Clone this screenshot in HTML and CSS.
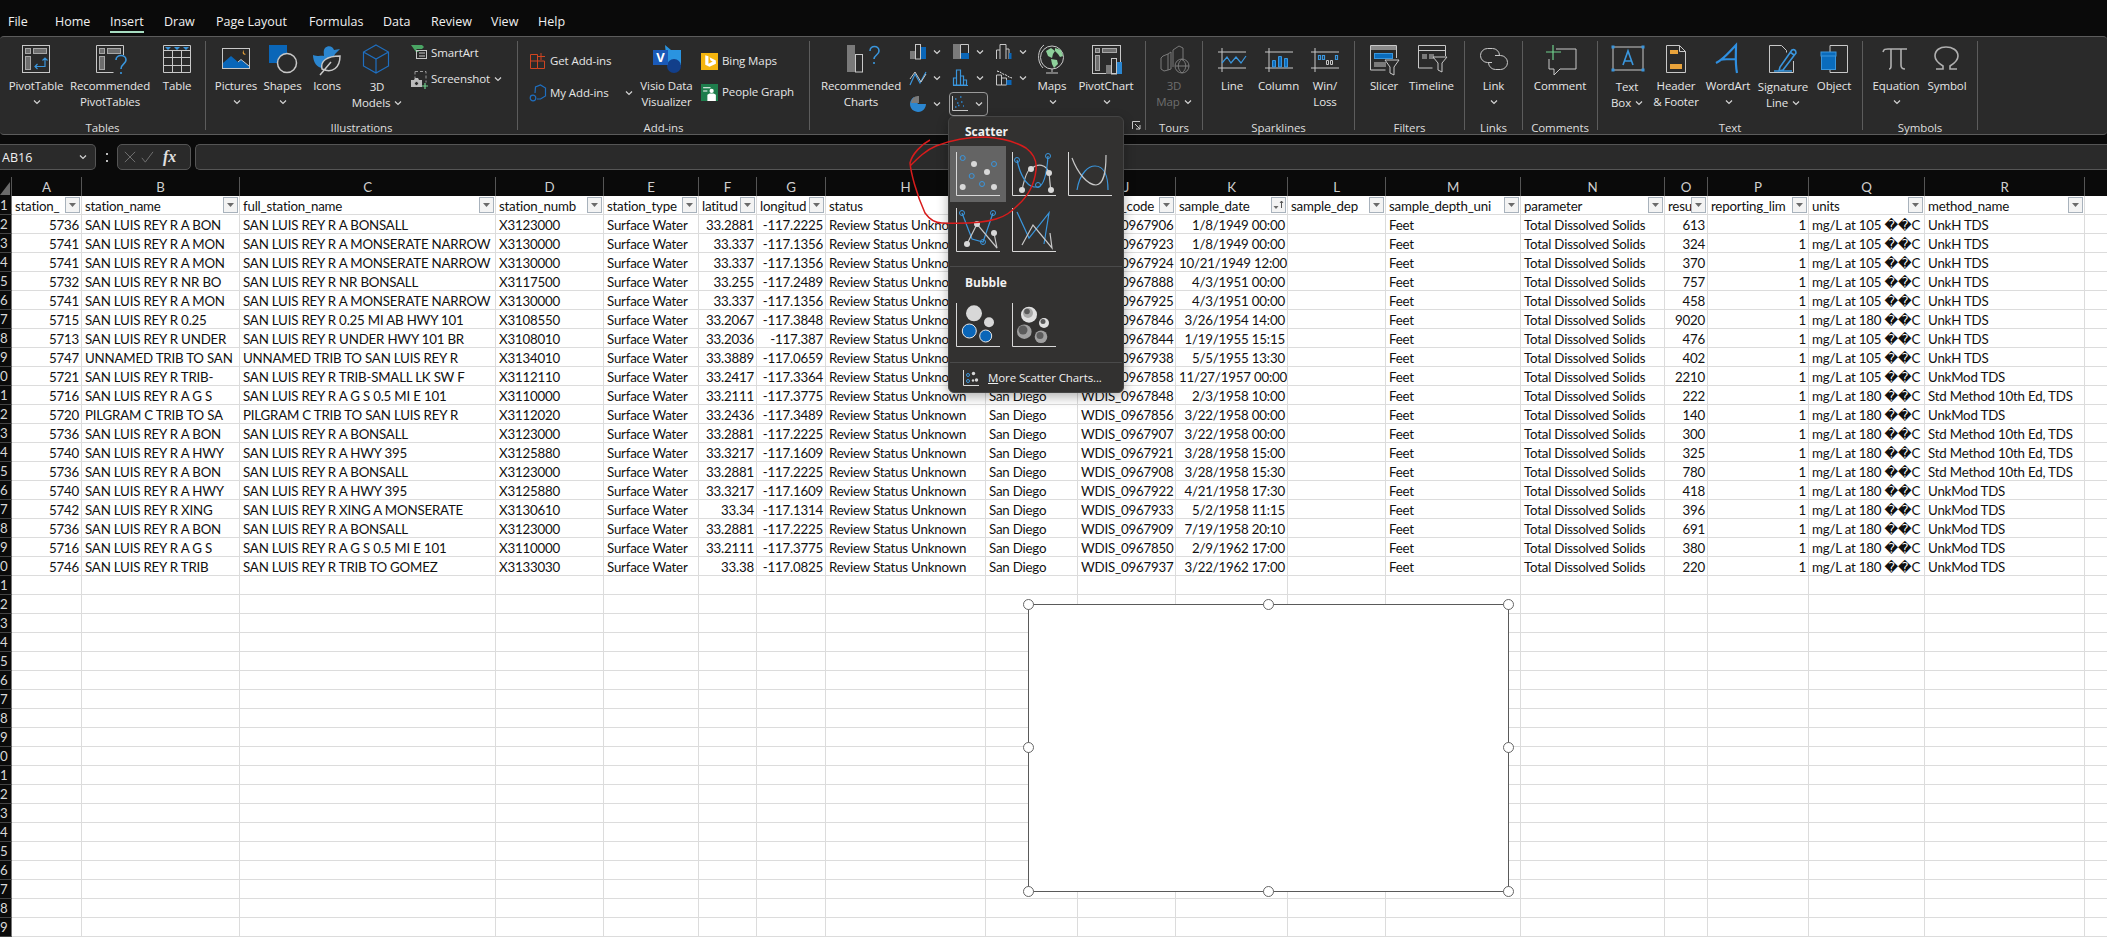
FILE: index.html
```html
<!DOCTYPE html>
<html lang="en">
<head>
<meta charset="utf-8">
<title>Excel - Insert Scatter</title>
<link rel="stylesheet" href="styles.css">
</head>
<body>
<svg class="sprite" aria-hidden="true">
<symbol id="chev" viewBox="0 0 8 16"><path class="chv" d="M1 6.5l3 3 3-3"/></symbol>
<symbol id="pivot" viewBox="0 0 28 28"><rect class="s" x=".5" y=".5" width="27" height="27"/><rect class="gb" x="3.5" y="3.5" width="5" height="5"/><rect class="gb" x="11.5" y="3.5" width="13" height="5"/><rect class="gb" x="3.5" y="11.5" width="5" height="13"/><path class="b" d="M23 13v8.5H13M20.5 15.5L23 13l2.5 2.5M15.5 19L13 21.500l2.500 2.500"/></symbol>
<symbol id="recpivot" viewBox="0 0 28 28"><path class="s" d="M27.500 10V.5H.5v27h17"/><rect class="gb" x="3.500" y="3.500" width="5" height="5"/><rect class="gb" x="11.500" y="3.500" width="13" height="5"/><rect class="gb" x="3.500" y="11.500" width="5" height="13"/><path class="b2" d="M20 15c0-6 10-6 10 0 0 4-5 4-5 9M25 27v2"/></symbol>
<symbol id="table" viewBox="0 0 28 28"><path class="s" d="M.5.500h27v27H.5zM.5 5.500h27M.5 12.500h27M.5 20.500h27M9.500 5.500v22M18.500 5.500v22"/><path class="f2" d="M2 2h6l-3 3zM11 2h6l-3 3zM20 2h6l-3 3z"/></symbol>
<symbol id="pictures" viewBox="0 0 28 28"><rect class="s" x=".5" y="3.500" width="27" height="20"/><path class="f" d="M1 23v-5l8-7 7 6 3-2.500 8 6.500v2z"/><path class="s2" d="M16 17l3-2.500 8 6.500"/><path class="or" d="M22 5c-1 2 0 4 2 4-2 2-5-1-2-4z"/></symbol>
<symbol id="shapes" viewBox="0 0 28 28"><rect class="f" x="0" y="0" width="18" height="18"/><circle class="s3" cx="18" cy="18" r="9.500"/></symbol>
<symbol id="icons" viewBox="0 0 28 28"><path class="f3" d="M0 10c6 2 9 0 11 1 0-3-1-5 1-8 3-3 8-2 9 2l6-1-5 5c-1 3-3 4-4 5-4 1-8 4-8 9-6 0-10-6-10-13z"/><path class="s3" d="M9 24c-2-8 5-13 18-13 0 11-7 18-18 13zM7 30l11-13"/></symbol>
<symbol id="models" viewBox="0 0 28 28"><path class="bd" d="M13 0l12.500 7v14L13 28 .5 21V7zM.5 7L13 14l12.500-7M13 14v14"/></symbol>
<symbol id="smartart" viewBox="0 0 16 16"><path class="gr" d="M0 0h11l2 2-2 2H5l3 3H5z"/><rect class="s" x="5.500" y="5.500" width="10" height="8"/><path class="s" d="M8 8h6M8 11h6"/></symbol>
<symbol id="screenshot" viewBox="0 0 16 16"><path class="da" d="M4 .5h11v11M4 .5v7"/><path class="lf" d="M0 9h3l1-2h3l1 2h3v7H0z"/><circle class="dk" cx="5.500" cy="12.500" r="2"/><path class="gl" d="M14 12v6M11 15h6"/></symbol>
<symbol id="getaddin" viewBox="0 0 16 16"><path class="rd" d="M.5 1.500h7v14h7V8H.5v7.500h7M.5 1.500V8M11 0v7M8 3.500h7"/></symbol>
<symbol id="myaddin" viewBox="0 0 16 16"><path class="bd" d="M5 8l.500-6 5-2 5 3v8l-5 3H7"/><circle class="bd" cx="3" cy="13" r="2.800"/></symbol>
<symbol id="visio" viewBox="0 0 28 28"><path class="lb" d="M12 0l6 5h10v15H14z"/><circle class="db" cx="21" cy="21" r="7"/><rect class="mb" y="5" width="15" height="15"/><text class="vt" x="7.500" y="17">V</text></symbol>
<symbol id="bing" viewBox="0 0 16 16"><rect class="ye" width="16" height="16"/><path class="wh" d="M4 2l3 1v7l4-2-2-1-1-3 6 3v3l-6 3-4-2z"/></symbol>
<symbol id="people" viewBox="0 0 16 16"><rect class="gn" width="16" height="16"/><circle class="wh" cx="10" cy="6.500" r="2"/><path class="wh" d="M6 16v-6l2-1h4l2 1v6zM2 3h7v1H2zM2 6h4v1H2z"/></symbol>
<symbol id="reccharts" viewBox="0 0 28 28"><rect class="g" x="0" y="0" width="8" height="27"/><rect class="s" x="8.500" y="9.500" width="7" height="17.500"/><path class="b2" d="M23 6c0-6 9-6 9 0 0 4-5 4-5 8M27 17v2"/></symbol>
<symbol id="c1" viewBox="0 0 16 16"><rect class="g" y="7" width="5" height="8"/><rect class="s" x="5.500" y=".5" width="5" height="14.500"/><rect class="f" x="11" y="3" width="5" height="12"/></symbol>
<symbol id="c2" viewBox="0 0 16 16"><rect class="g" width="7" height="15"/><path class="s" d="M7.500.5h8v14h-8z"/><rect class="f" x="8" y="9" width="8" height="6"/></symbol>
<symbol id="c3" viewBox="0 0 16 16"><path class="s" d="M.5 15V6H4V.5h6V5h3v10M4 6v9M10 5v10"/><rect class="f" x="13" y="9" width="2.500" height="6"/></symbol>
<symbol id="c4" viewBox="0 0 16 16"><path class="b" d="M0 15L5 4l5 9 6-11"/><path class="s" d="M0 9l5-7 6 10 5-8"/></symbol>
<symbol id="c5" viewBox="0 0 16 16"><path class="b" d="M.5 15V8h3V0h4v6h3v4h3V15zM0 15.500h15M3.500 8v7M7.500 6v9M10.500 10v5"/></symbol>
<symbol id="c6" viewBox="0 0 16 16"><path class="s" d="M.5 15V5h5v10zM5.500 8h5v7h-5z"/><rect class="f" x="10.500" y="10" width="5" height="5"/><path class="wl" d="M1 1l3 1 3 2 3 1 3 2 3 1"/></symbol>
<symbol id="c7" viewBox="0 0 16 16"><path class="f3" d="M8 8h8A8 8 0 1 1 4 1z"/><path class="g" d="M7.500 0H9v7H7.500z"/><path class="g" d="M1 7a7 7 0 0 1 7-7v7z"/></symbol>
<symbol id="c8" viewBox="0 0 16 16"><path class="s" d="M.5 0v14.500H16"/><path class="dots" d="M3 3h1.500M8 1h1.500M5 7h1.500M9 6h1.500M3 11h1.500M6 9.500h1.500M11 10h1"/></symbol>
<symbol id="globe" viewBox="0 0 28 28"><circle class="s" cx="14" cy="12.500" r="11.500"/><path class="s" d="M6 0C0 4-2 16 5 23M14 24v3M8 28h12"/><path class="mg" d="M8 6l5-3 4 3-2 3-1 4-4-2zM17 3l6 2 2 6-3 1-2-3-3-3zM13 14l6 1 1 4-4 4-2-4z"/></symbol>
<symbol id="pivotchart" viewBox="0 0 28 28"><rect class="s" x=".5" y=".5" width="28" height="28"/><rect class="gb" x="3.500" y="3.500" width="4" height="4"/><rect class="gb" x="10.500" y="3.500" width="14" height="4"/><rect class="gb" x="3.500" y="10.500" width="4" height="15"/><rect class="g" x="14" y="20" width="5" height="9"/><rect class="s" x="19.500" y="13.500" width="5" height="15.500"/><rect class="f3" x="25" y="17" width="5" height="12"/></symbol>
<symbol id="map3d" viewBox="0 0 28 28"><path class="ds" d="M3 11l5-2v16l-4 1-3-2V13zM8 9l3-2v17l-3 1M13 5l6-4 4 2v13M13 5v17"/><circle class="ds" cx="22" cy="21" r="7"/><path class="ds" d="M15 21h14M22 14c-5 4-5 10 0 14M22 14c5 4 5 10 0 14"/></symbol>
<symbol id="spline" viewBox="0 0 28 28"><path class="s" d="M4 3v24M0 7h28M0 23h28"/><path class="b" d="M4 18l5-6 4 6 5-6 5 6 5-7"/></symbol>
<symbol id="scol" viewBox="0 0 28 28"><path class="s" d="M4 3v24M0 7h28M0 23h28"/><path class="bf" d="M7.500 15.500h3V22h-3zM13.500 11.500h3V22h-3zM19.500 13.500h3V22h-3z"/></symbol>
<symbol id="swin" viewBox="0 0 28 28"><path class="s" d="M4 3v24M0 7h28M0 23h28"/><path class="b" d="M7.500 10.500h2v4h-2zM11.500 10.500h2v4h-2zM24.500 10.500h2v4h-2z"/><path class="s" d="M15.500 15.500h2v4h-2zM19.500 15.500h2v4h-2z"/></symbol>
<symbol id="slicer" viewBox="0 0 28 28"><path class="s" d="M.5 25V.5h26V13M.5 25h15"/><rect class="lg" x="1" y="1" width="25" height="4"/><rect class="bx" x="4.500" y="8.500" width="18" height="5"/><rect class="g" x="4" y="17" width="12" height="5"/><path class="s f0" d="M15 15h14l-5 7v8l-4-2v-6z"/></symbol>
<symbol id="timeline" viewBox="0 0 28 28"><path class="s" d="M.5 23V.5h27V11M.5 23h14M.5 5.500h27"/><rect class="g" x="4" y="9" width="5" height="5"/><rect class="g" x="11" y="9" width="5" height="5"/><path class="s f0" d="M15 12h14l-5 6v9l-4-2v-7z"/></symbol>
<symbol id="link" viewBox="0 0 28 28"><path class="s" d="M12 17.500H7.500a7 7 0 0 1 0-14h5a7 7 0 0 1 7 7M15 10.500h5.500a7 7 0 0 1 0 14h-5a7 7 0 0 1-7-7"/></symbol>
<symbol id="comment" viewBox="0 0 28 28"><path class="s" d="M10 4h20v20H14l-6 6v-6H3V14"/><path class="gl" d="M7 0v15M0 7h15"/></symbol>
<symbol id="textbox" viewBox="0 0 28 28"><rect class="s" x="0" y="2" width="30" height="23"/><path class="b2" d="M10 20l5-14 5 14M11.500 16h7"/><path class="bf3" d="M-1.500.5h3v3h-3zM28.500.5h3v3h-3zM-1.500 23.500h3v3h-3zM28.500 23.500h3v3h-3z"/></symbol>
<symbol id="header" viewBox="0 0 28 28"><path class="s" d="M4.500.5h13l6 6v21h-19zM17.500.5v6h6"/><path class="ob" d="M8 5h8v4H8zM8 19h12v5H8z"/></symbol>
<symbol id="wordart" viewBox="0 0 28 28"><path class="wa" d="M2 18C10 14 16 6 22 0c0 9-1 18 1 28M6 15c5-1 10-1 16-1"/></symbol>
<symbol id="signature" viewBox="0 0 28 28"><path class="s" d="M.5 27.500V.5h12l5 5v2M24.500 16v11.500H.5"/><path class="b2" d="M11 22l-1 4 4-1L27 8c0-3-2-4-4-3zM21 7l4 3M5 26h18"/></symbol>
<symbol id="object" viewBox="0 0 28 28"><path class="s" d="M10 .5h17.500v27H10"/><path class="s" d="M10 .5v7M10 24v3.500"/><rect class="bx" x="1.500" y="7.500" width="14" height="17"/><rect class="bf" x="1" y="7" width="15" height="4"/></symbol>
<symbol id="pi" viewBox="0 0 28 28"><path class="pi" d="M1 7c1-3 2-3 5-3h19M9 4v17c0 2-1 3-2 3M19 4v16c0 3 1 4 4 4"/></symbol>
<symbol id="omega" viewBox="0 0 28 28"><path class="pi" d="M3 24h7v-3c-5-3-8-6-8-10 0-6 5-9 11-9s12 3 12 9c0 4-3 7-8 10v3h7"/></symbol>
<symbol id="launcher" viewBox="0 0 9 9"><path class="s" d="M.5 8V.5H8M3 3l5 5M8 4v4H4"/></symbol>
<symbol id="fxcross" viewBox="0 0 14 14"><path class="fxl" d="M1 1l12 12M13 1L1 13"/></symbol>
<symbol id="fxcheck" viewBox="0 0 14 14"><path class="fxl" d="M1 8l4 5L14 1"/></symbol>
<symbol id="sc1" viewBox="0 0 56 56"><path class="ax" d="M6.500 6v43.500H50"/><circle class="op" cx="12.700" cy="12" r="2.500"/><circle class="op" cx="44" cy="18" r="2.500"/><circle class="op" cx="21.700" cy="30" r="2.500"/><circle class="op" cx="32" cy="38" r="2.500"/><circle class="fd" cx="24" cy="18" r="3"/><circle class="fd" cx="37" cy="26" r="3"/><circle class="fd" cx="12.700" cy="41" r="3"/><circle class="fd" cx="44" cy="41" r="3"/></symbol>
<symbol id="sc2" viewBox="0 0 56 56"><path class="ax" d="M6.500 6v43.500H50"/><path class="ln" d="M16 44c3-14 6-21 9-21 7-6 15-5 18 4 1 8 1 13 2 17"/><path class="lb2" d="M11 14c3 14 9 26 17 27h4c6-1 9-16 10-31"/><circle class="op" cx="11" cy="14" r="2.500"/><circle class="op" cx="42" cy="10" r="2.500"/><circle class="op" cx="32" cy="39" r="2.500"/><circle class="fd" cx="16" cy="44" r="3"/><circle class="fd" cx="25" cy="23" r="3"/><circle class="fd" cx="43" cy="27" r="3"/><circle class="fd" cx="45" cy="44" r="3"/></symbol>
<symbol id="sc3" viewBox="0 0 56 56"><path class="ax" d="M6.500 6v43.500H50"/><path class="lb2" d="M15 44c3-18 12-24 18-24 9 0 13 10 13 24"/><path class="ln" d="M10 12c6 16 16 27 24 27 8-1 10-13 10-30"/></symbol>
<symbol id="sc4" viewBox="0 0 56 56"><path class="ax" d="M6.500 6v43.500H50"/><path class="lb2" d="M12 11l10 26 11 3 10-29"/><path class="ln" d="M17 42l10-20 20 24-3-15"/><circle class="op" cx="12" cy="11" r="2.500"/><circle class="op" cx="43" cy="11" r="2.500"/><circle class="op" cx="33" cy="40" r="2.500"/><circle class="fd" cx="27" cy="22" r="3"/><circle class="fd" cx="44" cy="31" r="3"/><circle class="fd" cx="17" cy="42" r="3"/></symbol>
<symbol id="sc5" viewBox="0 0 56 56"><path class="ax" d="M6.500 6v43.500H50"/><path class="lb2" d="M11 10l12 26 20-25-5 31"/><path class="ln" d="M16 43l11-20 19 23-2-15"/></symbol>
<symbol id="bu1" viewBox="0 0 56 44"><path class="ax" d="M6.500 0v43.500H50"/><circle class="fd" cx="24" cy="10.300" r="8"/><circle class="fd" cx="39" cy="19.300" r="5"/><circle class="bb" cx="19.300" cy="28" r="7"/><circle class="bb" cx="35.700" cy="33" r="6"/></symbol>
<symbol id="bu2" viewBox="0 0 56 44"><path class="ax" d="M6.500 0v43.500H50"/><circle class="o1" cx="23" cy="11.700" r="8"/><circle class="o2" cx="22" cy="10" r="5"/><circle class="o3" cx="21" cy="8.500" r="2.800"/><circle class="o1" cx="38" cy="20" r="5"/><circle class="o3" cx="37" cy="18.500" r="2.500"/><circle class="o4" cx="18.300" cy="28.700" r="7.300"/><circle class="o5" cx="17" cy="27" r="4.500"/><circle class="o4" cx="35" cy="33.700" r="6.300"/><circle class="o5" cx="34" cy="32.500" r="3.500"/></symbol>
<symbol id="more" viewBox="0 0 16 16"><path class="ax" d="M.5 0v15.500H16"/><circle class="fd" cx="10.500" cy="3.500" r="1.700"/><circle class="fd" cx="13.500" cy="10" r="1.700"/><circle class="fd" cx="10" cy="10.500" r="1.200"/><circle class="op" cx="5" cy="11" r="1.500"/><circle class="op" cx="5" cy="5" r="1.500"/></symbol>
<symbol id="filter" viewBox="0 0 13 14"><path class="ft" d="M3 5h7L6.500 9z"/></symbol>
<symbol id="sortf" viewBox="0 0 13 14"><path class="ft" d="M1.500 8h5L4 11z"/><path class="fs" d="M9.500 10V3M8 5l1.500-2L11 5"/></symbol>
</svg>

<nav class="tabs">
<span class="tab">File</span><span class="tab">Home</span><span class="tab"><span class="active">Insert</span></span><span class="tab">Draw</span><span class="tab">Page Layout</span><span class="tab">Formulas</span><span class="tab">Data</span><span class="tab">Review</span><span class="tab">View</span><span class="tab">Help</span>
</nav>

<section class="ribbon">
<div class="group w206"><div class="body">
<div class="btn w72"><svg class="ic"><use href="#pivot"/></svg><span class="lbl">PivotTable</span><svg class="chev"><use href="#chev"/></svg></div>
<div class="btn w76"><svg class="ic"><use href="#recpivot"/></svg><span class="lbl">Recommended</span><span class="lbl">PivotTables</span></div>
<div class="btn w58"><svg class="ic"><use href="#table"/></svg><span class="lbl">Table</span></div>
</div><div class="glabel">Tables</div></div>

<div class="group w312"><div class="body">
<div class="btn w60"><svg class="ic"><use href="#pictures"/></svg><span class="lbl">Pictures</span><svg class="chev"><use href="#chev"/></svg></div>
<div class="btn w33"><svg class="ic"><use href="#shapes"/></svg><span class="lbl">Shapes</span><svg class="chev"><use href="#chev"/></svg></div>
<div class="btn w56"><svg class="ic"><use href="#icons"/></svg><span class="lbl">Icons</span></div>
<div class="btn w44 low"><svg class="ic"><use href="#models"/></svg><span class="lbl">3D</span><span class="lbl">Models <svg class="chev"><use href="#chev"/></svg></span></div>
<div class="smalls sm-art">
<div class="small"><svg class="ic16"><use href="#smartart"/></svg><span class="lbl">SmartArt</span></div>
<div class="small"><svg class="ic16"><use href="#screenshot"/></svg><span class="lbl">Screenshot <svg class="chev"><use href="#chev"/></svg></span></div>
</div>
</div><div class="glabel">Illustrations</div></div>

<div class="group w292"><div class="body">
<div class="smalls sm-add">
<div class="small"><svg class="ic16"><use href="#getaddin"/></svg><span class="lbl">Get Add-ins</span></div>
<div class="small"><svg class="ic16"><use href="#myaddin"/></svg><span class="lbl">My Add-ins</span><svg class="chev chev-far"><use href="#chev"/></svg></div>
</div>
<div class="btn w33"><svg class="ic"><use href="#visio"/></svg><span class="lbl">Visio Data</span><span class="lbl">Visualizer</span></div>
<div class="smalls sm-bing">
<div class="small"><svg class="ic16 ic17"><use href="#bing"/></svg><span class="lbl">Bing Maps</span></div>
<div class="small"><svg class="ic16 ic17"><use href="#people"/></svg><span class="lbl">People Graph</span></div>
</div>
</div><div class="glabel">Add-ins</div></div>

<div class="group w336"><div class="body">
<div class="btn w102"><svg class="ic"><use href="#reccharts"/></svg><span class="lbl">Recommended</span><span class="lbl">Charts</span></div>
<div class="cgrid">
<div class="cc"><svg class="ic16"><use href="#c1"/></svg><svg class="chev"><use href="#chev"/></svg></div>
<div class="cc"><svg class="ic16"><use href="#c2"/></svg><svg class="chev"><use href="#chev"/></svg></div>
<div class="cc"><svg class="ic16"><use href="#c3"/></svg><svg class="chev"><use href="#chev"/></svg></div>
<div class="cc"><svg class="ic16"><use href="#c4"/></svg><svg class="chev"><use href="#chev"/></svg></div>
<div class="cc"><svg class="ic16"><use href="#c5"/></svg><svg class="chev"><use href="#chev"/></svg></div>
<div class="cc"><svg class="ic16"><use href="#c6"/></svg><svg class="chev"><use href="#chev"/></svg></div>
<div class="cc"><svg class="ic16"><use href="#c7"/></svg><svg class="chev"><use href="#chev"/></svg></div>
<div class="cc on"><svg class="ic16"><use href="#c8"/></svg><svg class="chev"><use href="#chev"/></svg></div>
</div>
<div class="btn w42"><svg class="ic"><use href="#globe"/></svg><span class="lbl">Maps</span><svg class="chev"><use href="#chev"/></svg></div>
<div class="btn w66"><svg class="ic"><use href="#pivotchart"/></svg><span class="lbl">PivotChart</span><svg class="chev"><use href="#chev"/></svg></div>
</div><div class="glabel"><svg class="launch"><use href="#launcher"/></svg></div></div>

<div class="group w57"><div class="body">
<div class="btn w56 off"><svg class="ic"><use href="#map3d"/></svg><span class="lbl">3D</span><span class="lbl">Map <svg class="chev"><use href="#chev"/></svg></span></div>
</div><div class="glabel">Tours</div></div>

<div class="group w152"><div class="body">
<div class="btn w58"><svg class="ic"><use href="#spline"/></svg><span class="lbl">Line</span></div>
<div class="btn w35"><svg class="ic"><use href="#scol"/></svg><span class="lbl">Column</span></div>
<div class="btn w58"><svg class="ic"><use href="#swin"/></svg><span class="lbl">Win/</span><span class="lbl">Loss</span></div>
</div><div class="glabel">Sparklines</div></div>

<div class="group w110"><div class="body">
<div class="btn w58"><svg class="ic"><use href="#slicer"/></svg><span class="lbl">Slicer</span></div>
<div class="btn w37"><svg class="ic"><use href="#timeline"/></svg><span class="lbl">Timeline</span></div>
</div><div class="glabel">Filters</div></div>

<div class="group w58"><div class="body">
<div class="btn w58"><svg class="ic"><use href="#link"/></svg><span class="lbl">Link</span><svg class="chev"><use href="#chev"/></svg></div>
</div><div class="glabel">Links</div></div>

<div class="group w75"><div class="body">
<div class="btn w74"><svg class="ic"><use href="#comment"/></svg><span class="lbl">Comment</span></div>
</div><div class="glabel">Comments</div></div>

<div class="group w265"><div class="body">
<div class="btn w58 low"><svg class="ic"><use href="#textbox"/></svg><span class="lbl">Text</span><span class="lbl">Box <svg class="chev"><use href="#chev"/></svg></span></div>
<div class="btn w40"><svg class="ic"><use href="#header"/></svg><span class="lbl">Header</span><span class="lbl">&amp; Footer</span></div>
<div class="btn w64"><svg class="ic"><use href="#wordart"/></svg><span class="lbl">WordArt</span><svg class="chev"><use href="#chev"/></svg></div>
<div class="btn w46 low"><svg class="ic"><use href="#signature"/></svg><span class="lbl">Signature</span><span class="lbl">Line <svg class="chev"><use href="#chev"/></svg></span></div>
<div class="btn w56"><svg class="ic"><use href="#object"/></svg><span class="lbl">Object</span></div>
</div><div class="glabel">Text</div></div>

<div class="group w115"><div class="body">
<div class="btn w66"><svg class="ic"><use href="#pi"/></svg><span class="lbl">Equation</span><svg class="chev"><use href="#chev"/></svg></div>
<div class="btn w36"><svg class="ic"><use href="#omega"/></svg><span class="lbl">Symbol</span></div>
</div><div class="glabel">Symbols</div></div>
</section>

<section class="fbar">
<div class="namebox"><span>AB16</span><svg class="chev chev-nb"><use href="#chev"/></svg></div>
<div class="fdots"><i></i></div>
<div class="fxbox"><svg class="fxi"><use href="#fxcross"/></svg><svg class="fxi"><use href="#fxcheck"/></svg><span class="fx-f">fx</span></div>
<div class="finput"></div>
</section>

<main class="sheet">
<table class="grid">
<colgroup><col class="c0"><col class="ca"><col class="cb"><col class="cc1"><col class="cd"><col class="ce"><col class="cf"><col class="cg"><col class="ch"><col class="ci"><col class="cj"><col class="ck"><col class="cl"><col class="cm"><col class="cn"><col class="co"><col class="cp"><col class="cq"><col class="cr"><col class="cs"></colgroup>
<thead><tr><th class="corner"><svg class="tri" viewBox="0 0 10 13"><path d="M10 0v13H0z"/></svg></th><th>A</th><th>B</th><th>C</th><th>D</th><th>E</th><th>F</th><th>G</th><th>H</th><th>I</th><th>J</th><th>K</th><th>L</th><th>M</th><th>N</th><th>O</th><th>P</th><th>Q</th><th>R</th><th></th></tr></thead>
<tbody>
<tr class="hd"><th>1</th><td>station_<i class="fb"><svg><use href="#filter"/></svg></i></td><td>station_name<i class="fb"><svg><use href="#filter"/></svg></i></td><td>full_station_name<i class="fb"><svg><use href="#filter"/></svg></i></td><td>station_numb<i class="fb"><svg><use href="#filter"/></svg></i></td><td>station_type<i class="fb"><svg><use href="#filter"/></svg></i></td><td>latitud<i class="fb"><svg><use href="#filter"/></svg></i></td><td>longitud<i class="fb"><svg><use href="#filter"/></svg></i></td><td>status<i class="fb"><svg><use href="#filter"/></svg></i></td><td>county_name<i class="fb"><svg><use href="#filter"/></svg></i></td><td>sample_code<i class="fb"><svg><use href="#filter"/></svg></i></td><td>sample_date<i class="fb"><svg><use href="#sortf"/></svg></i></td><td>sample_dep<i class="fb"><svg><use href="#filter"/></svg></i></td><td>sample_depth_uni<i class="fb"><svg><use href="#filter"/></svg></i></td><td>parameter<i class="fb"><svg><use href="#filter"/></svg></i></td><td>resu<i class="fb"><svg><use href="#filter"/></svg></i></td><td>reporting_lim<i class="fb"><svg><use href="#filter"/></svg></i></td><td>units<i class="fb"><svg><use href="#filter"/></svg></i></td><td>method_name<i class="fb"><svg><use href="#filter"/></svg></i></td><td></td></tr>
<tr><th>2</th><td class="n">5736</td><td>SAN LUIS REY R A BON</td><td>SAN LUIS REY R A BONSALL</td><td>X3123000</td><td>Surface Water</td><td class="n">33.2881</td><td class="n">-117.2225</td><td>Review Status Unknown</td><td>San Diego</td><td>WDIS_0967906</td><td class="n">1/8/1949 00:00</td><td></td><td>Feet</td><td>Total Dissolved Solids</td><td class="n">613</td><td class="n">1</td><td>mg/L at 105 ��C</td><td>UnkH TDS</td><td></td></tr>
<tr><th>3</th><td class="n">5741</td><td>SAN LUIS REY R A MON</td><td>SAN LUIS REY R A MONSERATE NARROW</td><td>X3130000</td><td>Surface Water</td><td class="n">33.337</td><td class="n">-117.1356</td><td>Review Status Unknown</td><td>San Diego</td><td>WDIS_0967923</td><td class="n">1/8/1949 00:00</td><td></td><td>Feet</td><td>Total Dissolved Solids</td><td class="n">324</td><td class="n">1</td><td>mg/L at 105 ��C</td><td>UnkH TDS</td><td></td></tr>
<tr><th>4</th><td class="n">5741</td><td>SAN LUIS REY R A MON</td><td>SAN LUIS REY R A MONSERATE NARROW</td><td>X3130000</td><td>Surface Water</td><td class="n">33.337</td><td class="n">-117.1356</td><td>Review Status Unknown</td><td>San Diego</td><td>WDIS_0967924</td><td class="n">10/21/1949 12:00</td><td></td><td>Feet</td><td>Total Dissolved Solids</td><td class="n">370</td><td class="n">1</td><td>mg/L at 105 ��C</td><td>UnkH TDS</td><td></td></tr>
<tr><th>5</th><td class="n">5732</td><td>SAN LUIS REY R NR BO</td><td>SAN LUIS REY R NR BONSALL</td><td>X3117500</td><td>Surface Water</td><td class="n">33.255</td><td class="n">-117.2489</td><td>Review Status Unknown</td><td>San Diego</td><td>WDIS_0967888</td><td class="n">4/3/1951 00:00</td><td></td><td>Feet</td><td>Total Dissolved Solids</td><td class="n">757</td><td class="n">1</td><td>mg/L at 105 ��C</td><td>UnkH TDS</td><td></td></tr>
<tr><th>6</th><td class="n">5741</td><td>SAN LUIS REY R A MON</td><td>SAN LUIS REY R A MONSERATE NARROW</td><td>X3130000</td><td>Surface Water</td><td class="n">33.337</td><td class="n">-117.1356</td><td>Review Status Unknown</td><td>San Diego</td><td>WDIS_0967925</td><td class="n">4/3/1951 00:00</td><td></td><td>Feet</td><td>Total Dissolved Solids</td><td class="n">458</td><td class="n">1</td><td>mg/L at 105 ��C</td><td>UnkH TDS</td><td></td></tr>
<tr><th>7</th><td class="n">5715</td><td>SAN LUIS REY R 0.25</td><td>SAN LUIS REY R 0.25 MI AB HWY 101</td><td>X3108550</td><td>Surface Water</td><td class="n">33.2067</td><td class="n">-117.3848</td><td>Review Status Unknown</td><td>San Diego</td><td>WDIS_0967846</td><td class="n">3/26/1954 14:00</td><td></td><td>Feet</td><td>Total Dissolved Solids</td><td class="n">9020</td><td class="n">1</td><td>mg/L at 180 ��C</td><td>UnkH TDS</td><td></td></tr>
<tr><th>8</th><td class="n">5713</td><td>SAN LUIS REY R UNDER</td><td>SAN LUIS REY R UNDER HWY 101 BR</td><td>X3108010</td><td>Surface Water</td><td class="n">33.2036</td><td class="n">-117.387</td><td>Review Status Unknown</td><td>San Diego</td><td>WDIS_0967844</td><td class="n">1/19/1955 15:15</td><td></td><td>Feet</td><td>Total Dissolved Solids</td><td class="n">476</td><td class="n">1</td><td>mg/L at 105 ��C</td><td>UnkH TDS</td><td></td></tr>
<tr><th>9</th><td class="n">5747</td><td>UNNAMED TRIB TO SAN</td><td>UNNAMED TRIB TO SAN LUIS REY R</td><td>X3134010</td><td>Surface Water</td><td class="n">33.3889</td><td class="n">-117.0659</td><td>Review Status Unknown</td><td>San Diego</td><td>WDIS_0967938</td><td class="n">5/5/1955 13:30</td><td></td><td>Feet</td><td>Total Dissolved Solids</td><td class="n">402</td><td class="n">1</td><td>mg/L at 105 ��C</td><td>UnkH TDS</td><td></td></tr>
<tr><th>0</th><td class="n">5721</td><td>SAN LUIS REY R TRIB-</td><td>SAN LUIS REY R TRIB-SMALL LK SW F</td><td>X3112110</td><td>Surface Water</td><td class="n">33.2417</td><td class="n">-117.3364</td><td>Review Status Unknown</td><td>San Diego</td><td>WDIS_0967858</td><td class="n">11/27/1957 00:00</td><td></td><td>Feet</td><td>Total Dissolved Solids</td><td class="n">2210</td><td class="n">1</td><td>mg/L at 105 ��C</td><td>UnkMod TDS</td><td></td></tr>
<tr><th>1</th><td class="n">5716</td><td>SAN LUIS REY R A G S</td><td>SAN LUIS REY R A G S 0.5 MI E 101</td><td>X3110000</td><td>Surface Water</td><td class="n">33.2111</td><td class="n">-117.3775</td><td>Review Status Unknown</td><td>San Diego</td><td>WDIS_0967848</td><td class="n">2/3/1958 10:00</td><td></td><td>Feet</td><td>Total Dissolved Solids</td><td class="n">222</td><td class="n">1</td><td>mg/L at 180 ��C</td><td>Std Method 10th Ed, TDS</td><td></td></tr>
<tr><th>2</th><td class="n">5720</td><td>PILGRAM C TRIB TO SA</td><td>PILGRAM C TRIB TO SAN LUIS REY R</td><td>X3112020</td><td>Surface Water</td><td class="n">33.2436</td><td class="n">-117.3489</td><td>Review Status Unknown</td><td>San Diego</td><td>WDIS_0967856</td><td class="n">3/22/1958 00:00</td><td></td><td>Feet</td><td>Total Dissolved Solids</td><td class="n">140</td><td class="n">1</td><td>mg/L at 180 ��C</td><td>UnkMod TDS</td><td></td></tr>
<tr><th>3</th><td class="n">5736</td><td>SAN LUIS REY R A BON</td><td>SAN LUIS REY R A BONSALL</td><td>X3123000</td><td>Surface Water</td><td class="n">33.2881</td><td class="n">-117.2225</td><td>Review Status Unknown</td><td>San Diego</td><td>WDIS_0967907</td><td class="n">3/22/1958 00:00</td><td></td><td>Feet</td><td>Total Dissolved Solids</td><td class="n">300</td><td class="n">1</td><td>mg/L at 180 ��C</td><td>Std Method 10th Ed, TDS</td><td></td></tr>
<tr><th>4</th><td class="n">5740</td><td>SAN LUIS REY R A HWY</td><td>SAN LUIS REY R A HWY 395</td><td>X3125880</td><td>Surface Water</td><td class="n">33.3217</td><td class="n">-117.1609</td><td>Review Status Unknown</td><td>San Diego</td><td>WDIS_0967921</td><td class="n">3/28/1958 15:00</td><td></td><td>Feet</td><td>Total Dissolved Solids</td><td class="n">325</td><td class="n">1</td><td>mg/L at 180 ��C</td><td>Std Method 10th Ed, TDS</td><td></td></tr>
<tr><th>5</th><td class="n">5736</td><td>SAN LUIS REY R A BON</td><td>SAN LUIS REY R A BONSALL</td><td>X3123000</td><td>Surface Water</td><td class="n">33.2881</td><td class="n">-117.2225</td><td>Review Status Unknown</td><td>San Diego</td><td>WDIS_0967908</td><td class="n">3/28/1958 15:30</td><td></td><td>Feet</td><td>Total Dissolved Solids</td><td class="n">780</td><td class="n">1</td><td>mg/L at 180 ��C</td><td>Std Method 10th Ed, TDS</td><td></td></tr>
<tr><th>6</th><td class="n">5740</td><td>SAN LUIS REY R A HWY</td><td>SAN LUIS REY R A HWY 395</td><td>X3125880</td><td>Surface Water</td><td class="n">33.3217</td><td class="n">-117.1609</td><td>Review Status Unknown</td><td>San Diego</td><td>WDIS_0967922</td><td class="n">4/21/1958 17:30</td><td></td><td>Feet</td><td>Total Dissolved Solids</td><td class="n">418</td><td class="n">1</td><td>mg/L at 180 ��C</td><td>UnkMod TDS</td><td></td></tr>
<tr><th>7</th><td class="n">5742</td><td>SAN LUIS REY R XING</td><td>SAN LUIS REY R XING A MONSERATE</td><td>X3130610</td><td>Surface Water</td><td class="n">33.34</td><td class="n">-117.1314</td><td>Review Status Unknown</td><td>San Diego</td><td>WDIS_0967933</td><td class="n">5/2/1958 11:15</td><td></td><td>Feet</td><td>Total Dissolved Solids</td><td class="n">396</td><td class="n">1</td><td>mg/L at 180 ��C</td><td>UnkMod TDS</td><td></td></tr>
<tr><th>8</th><td class="n">5736</td><td>SAN LUIS REY R A BON</td><td>SAN LUIS REY R A BONSALL</td><td>X3123000</td><td>Surface Water</td><td class="n">33.2881</td><td class="n">-117.2225</td><td>Review Status Unknown</td><td>San Diego</td><td>WDIS_0967909</td><td class="n">7/19/1958 20:10</td><td></td><td>Feet</td><td>Total Dissolved Solids</td><td class="n">691</td><td class="n">1</td><td>mg/L at 180 ��C</td><td>UnkMod TDS</td><td></td></tr>
<tr><th>9</th><td class="n">5716</td><td>SAN LUIS REY R A G S</td><td>SAN LUIS REY R A G S 0.5 MI E 101</td><td>X3110000</td><td>Surface Water</td><td class="n">33.2111</td><td class="n">-117.3775</td><td>Review Status Unknown</td><td>San Diego</td><td>WDIS_0967850</td><td class="n">2/9/1962 17:00</td><td></td><td>Feet</td><td>Total Dissolved Solids</td><td class="n">380</td><td class="n">1</td><td>mg/L at 180 ��C</td><td>UnkMod TDS</td><td></td></tr>
<tr><th>0</th><td class="n">5746</td><td>SAN LUIS REY R TRIB</td><td>SAN LUIS REY R TRIB TO GOMEZ</td><td>X3133030</td><td>Surface Water</td><td class="n">33.38</td><td class="n">-117.0825</td><td>Review Status Unknown</td><td>San Diego</td><td>WDIS_0967937</td><td class="n">3/22/1962 17:00</td><td></td><td>Feet</td><td>Total Dissolved Solids</td><td class="n">220</td><td class="n">1</td><td>mg/L at 180 ��C</td><td>UnkMod TDS</td><td></td></tr>
<tr><th>1</th><td colspan="19" class="blank"></td></tr>
<tr><th>2</th><td colspan="19" class="blank"></td></tr>
<tr><th>3</th><td colspan="19" class="blank"></td></tr>
<tr><th>4</th><td colspan="19" class="blank"></td></tr>
<tr><th>5</th><td colspan="19" class="blank"></td></tr>
<tr><th>6</th><td colspan="19" class="blank"></td></tr>
<tr><th>7</th><td colspan="19" class="blank"></td></tr>
<tr><th>8</th><td colspan="19" class="blank"></td></tr>
<tr><th>9</th><td colspan="19" class="blank"></td></tr>
<tr><th>0</th><td colspan="19" class="blank"></td></tr>
<tr><th>1</th><td colspan="19" class="blank"></td></tr>
<tr><th>2</th><td colspan="19" class="blank"></td></tr>
<tr><th>3</th><td colspan="19" class="blank"></td></tr>
<tr><th>4</th><td colspan="19" class="blank"></td></tr>
<tr><th>5</th><td colspan="19" class="blank"></td></tr>
<tr><th>6</th><td colspan="19" class="blank"></td></tr>
<tr><th>7</th><td colspan="19" class="blank"></td></tr>
<tr><th>8</th><td colspan="19" class="blank"></td></tr>
<tr><th>9</th><td colspan="19" class="blank"></td></tr>
</tbody>
</table>
</main>

<div class="shape">
<i class="h tl"></i><i class="h tm"></i><i class="h tr"></i><i class="h ml"></i><i class="h mr"></i><i class="h bl"></i><i class="h bm"></i><i class="h br"></i>
</div>

<aside class="menu">
<div class="mhead">Scatter</div>
<div class="mgrid">
<div class="mcell sel"><svg class="sc"><use href="#sc1"/></svg></div>
<div class="mcell"><svg class="sc"><use href="#sc2"/></svg></div>
<div class="mcell"><svg class="sc"><use href="#sc3"/></svg></div>
<div class="mcell"><svg class="sc"><use href="#sc4"/></svg></div>
<div class="mcell"><svg class="sc"><use href="#sc5"/></svg></div>
</div>
<div class="mdiv"></div>
<div class="mhead mhead2">Bubble</div>
<div class="mgrid mbub">
<div class="mcell bub"><svg class="bu"><use href="#bu1"/></svg></div>
<div class="mcell bub"><svg class="bu"><use href="#bu2"/></svg></div>
</div>
<div class="mdiv mdiv2"></div>
<div class="mfoot"><svg class="ic16"><use href="#more"/></svg><span><u>M</u>ore Scatter Charts...</span></div>
</aside>

<svg class="redmark" viewBox="0 0 140 100" aria-hidden="true"><path d="M24 12C16 16 6 26 4 35C5 45 10 65 19 85C24 92 30 95 36 95C60 96 80 94 90 91C100 88 105 84 112 77C120 70 128 60 130 42C131 34 128 26 120 20C110 14 95 10 80 9C65 9 45 12 30 18C20 22 12 30 4 38"/></svg>
</body>
</html>
```
FILE: styles.css
```css
* { box-sizing: border-box; }
html, body { margin: 0; height: 937px; overflow: hidden; }
body { background: #0a0a0a; font-family: "Open Sans", "Liberation Sans", sans-serif; font-size: 11.5px; letter-spacing: -.1px; color: #e6e6e6; position: relative; }
.sprite { width: 0; height: 0; position: absolute; }
symbol { overflow: visible; }
svg { overflow: visible; fill: none; }

/* icon paint classes */
.s { stroke: #c8c8c8; fill: none; }
.s.f0 { fill: #2a2a2a; }
.s2 { stroke: #c8c8c8; fill: none; }
.s3 { stroke: #c8c8c8; stroke-width: 1.5; fill: #2a2a2a; }
.gb { stroke: #a8a8a8; fill: #6e6e6e; }
.g { fill: #7a7a7a; }
.lg { fill: #8a8a8a; }
.b { stroke: #3a96dd; fill: none; stroke-width: 1.2; }
.b2 { stroke: #3a96dd; fill: none; stroke-width: 1.6; }
.bd { stroke: #1f6fc0; fill: none; stroke-width: 1.2; }
.bf { stroke: #3a96dd; fill: #0a6cbd; }
.bx { stroke: #3a96dd; fill: #0a6cbd; }
.bf3 { fill: #3a96dd; }
.f { fill: #0a66b8; }
.f2 { fill: #3a96dd; }
.f3 { fill: #2b86d0; }
.or { fill: #eda63b; }
.gr { fill: #4aa564; }
.da { stroke: #9a9a9a; stroke-dasharray: 3 2; fill: none; }
.lf { fill: #bdbdbd; }
.dk { fill: #2a2a2a; stroke: #bdbdbd; }
.gl { stroke: #6fd08c; fill: none; stroke-width: 1.2; }
.rd { stroke: #cf4520; fill: none; }
.lb { fill: #2a94e0; }
.db { fill: #123f8a; }
.mb { fill: #1a5ab8; }
.vt { fill: #fff; font: bold 13px "Open Sans", sans-serif; text-anchor: middle; }
.ye { fill: #f5b50e; }
.wh { fill: #fff; }
.gn { fill: #1e7d4c; }
.wl { stroke: #e8e8e8; stroke-dasharray: 2 1; fill: none; }
.dots { stroke: #2b86d0; stroke-width: 1.5; fill: none; }
.mg { fill: #8ed19b; }
.ds { stroke: #7a7a7a; fill: none; }
.ob { fill: #e9a33b; }
.wa { stroke: #2f8fe0; stroke-width: 2.2; fill: none; }
.pi { stroke: #b0b0b0; stroke-width: 1.6; fill: none; }
.chv { stroke: #d4d4d4; stroke-width: 1.2; fill: none; }
.fxl { stroke: #7a7a7a; stroke-width: 1; fill: none; }

/* tabs */
.tabs { height: 36px; padding: 14px 0 0 8px; display: grid; grid-template-columns: 47px 55px 54px 52px 93px 74px 48px 60px 47px auto; font-size: 12.5px; letter-spacing: 0; line-height: 16px; color: #f0f0f0; }
.tab { white-space: nowrap; }
.active { display: inline-block; padding-bottom: 1px; border-bottom: 2px solid #a6dcc0; }

/* ribbon */
.ribbon { height: 99px; padding-top: 4px; display: flex; background: #2a2a2a; border: 1px solid #5c5c5c; border-width: 1px 0; border-radius: 4px; }
.group { height: 89px; border-right: 1px solid #5c5c5c; flex: none; position: relative; }
.w206 { width: 206px; } .w312 { width: 312px; } .w292 { width: 292px; } .w336 { width: 336px; }
.w57 { width: 57px; } .w152 { width: 152px; } .w110 { width: 110px; } .w58 { width: 58px; }
.w75 { width: 75px; } .w265 { width: 265px; } .w115 { width: 115px; }
.body { height: 78px; padding-top: 4px; display: flex; }
.btn { flex: none; display: flex; flex-direction: column; align-items: center; line-height: 16px; }
.btn .ic { margin-bottom: 5px; }
.btn.low .ic { margin-bottom: 6px; }
.btn.off { color: #6e6e6e; }
.w72 { width: 72px; } .w76 { width: 76px; } .w60 { width: 60px; } .w33 { width: 33px; } .w56 { width: 56px; }
.w44 { width: 44px; } .w102 { width: 102px; } .w42 { width: 42px; } .w66 { width: 66px; } .w35 { width: 35px; }
.w37 { width: 37px; } .w74 { width: 74px; } .w40 { width: 40px; } .w64 { width: 64px; } .w46 { width: 46px; } .w36 { width: 36px; }
.group.w58 .btn { width: 57px; }
.ic { width: 28px; height: 28px; flex: none; }
.ic16 { width: 16px; height: 16px; flex: none; }
.ic17 { width: 17px; height: 17px; }
.lbl { white-space: nowrap; display: block; }
.chev { width: 8px; height: 16px; flex: none; vertical-align: top; margin-left: 1px; }
.glabel { height: 11px; line-height: 11px; margin-top: 3px; color: #dedede; position: relative; text-align: center; white-space: nowrap; }
.smalls { flex: none; display: flex; flex-direction: column; }
.sm-art { padding: 0 0 0 12px; row-gap: 10px; margin-top: 0; }
.sm-add { width: 132px; padding-left: 12px; padding-top: 8px; row-gap: 16px; }
.sm-bing { padding-left: 18px; padding-top: 8px; row-gap: 15px; }
.small { display: flex; align-items: center; column-gap: 4px; height: 16px; line-height: 16px; }
.chev-far { margin-left: 12px; }

/* chart mini-grid */
.cgrid { flex: none; width: 125px; margin: -5px 0 0 -6px; display: grid; grid-template-columns: repeat(3, 39px); grid-auto-rows: 24px; gap: 2px 4px; }
.cc { display: flex; align-items: center; padding-left: 3px; column-gap: 6px; border: 1px solid transparent; }
.cc.on { border-color: #9a9a9a; border-radius: 4px; background: #2f2f2f; padding-left: 2px; column-gap: 6px; }
.launch { position: absolute; right: 4px; top: -1px; width: 9px; height: 9px; }

/* formula bar */
.fbar { height: 26px; margin-top: 9px; display: flex; align-items: stretch; }
.namebox { width: 96px; background: #2a2a2a; border: 1px solid #555; border-left: 0; border-radius: 0 5px 5px 0; display: flex; align-items: center; justify-content: space-between; padding: 0 7px 0 2px; font-size: 12.5px; letter-spacing: 0; color: #f0f0f0; }
.chev-nb { width: 10px; }
.fdots { width: 21px; display: flex; align-items: center; justify-content: center; }
.fdots i { width: 2px; height: 9px; border: solid #bbb; border-width: 2px 0; }
.fxbox { width: 74px; background: #2a2a2a; border: 1px solid #555; border-radius: 5px; display: flex; align-items: center; padding-left: 6px; column-gap: 5px; }
.fxi { width: 12px; height: 12px; }
.fx-f { color: #e0e0e0; font: italic bold 16px "Liberation Serif", serif; margin-left: 5px; }
.finput { flex: 1; margin-left: 4px; background: #2a2a2a; border: 1px solid #555; border-right: 0; border-radius: 5px 0 0 5px; }

/* sheet */
.sheet { margin-top: 7px; background: #fff; }
.grid { width: 2107px; table-layout: fixed; border-collapse: separate; border-spacing: 0; font-family: Lato, "Liberation Sans", "DejaVu Sans", sans-serif; font-size: 13.3px; letter-spacing: -.2px; color: #111; }
.c0 { width: 12px; } .ca { width: 70px; } .cb { width: 158px; } .cc1 { width: 256px; } .cd { width: 108px; } .ce { width: 95px; }
.cf { width: 58px; } .cg { width: 69px; } .ch { width: 160px; } .ci { width: 92px; } .cj { width: 98px; } .ck { width: 112px; }
.cl { width: 98px; } .cm { width: 135px; } .cn { width: 144px; } .co { width: 43px; } .cp { width: 101px; } .cq { width: 116px; } .cr { width: 160px; } .cs { width: 22px; }
thead th { height: 19px; background: #0a0a0a; color: #cfcfcf; font-weight: 400; border-right: 1px solid #555; padding: 0; text-align: center; line-height: 18px; }
.corner { position: relative; }
.tri { position: absolute; left: 0; bottom: 1px; width: 10px; height: 13px; }
.tri path { fill: #6a6a6a; }
thead th:last-child { border-right: 0; }
tbody th { height: 19px; width: 12px; padding: 1px 5px 0 0; background: #0a0a0a; color: #d8d8d8; font-weight: 400; border-bottom: 1px solid #444; border-right: 1px solid #777; white-space: nowrap; text-align: right; line-height: 17px; }
tbody td { height: 19px; padding: 2px 2px 0 3px; border-right: 1px solid #dcdcdc; border-bottom: 1px solid #dcdcdc; overflow: hidden; white-space: nowrap; line-height: 16px; position: relative; vertical-align: middle; }
tbody td:last-child { border-right: 0; }
td.n { text-align: right; }
td.blank { background: linear-gradient(#dcdcdc, #dcdcdc) 69px 0 / 1px 100% no-repeat, linear-gradient(#dcdcdc, #dcdcdc) 227px 0 / 1px 100% no-repeat, linear-gradient(#dcdcdc, #dcdcdc) 483px 0 / 1px 100% no-repeat, linear-gradient(#dcdcdc, #dcdcdc) 591px 0 / 1px 100% no-repeat, linear-gradient(#dcdcdc, #dcdcdc) 686px 0 / 1px 100% no-repeat, linear-gradient(#dcdcdc, #dcdcdc) 744px 0 / 1px 100% no-repeat, linear-gradient(#dcdcdc, #dcdcdc) 813px 0 / 1px 100% no-repeat, linear-gradient(#dcdcdc, #dcdcdc) 973px 0 / 1px 100% no-repeat, linear-gradient(#dcdcdc, #dcdcdc) 1065px 0 / 1px 100% no-repeat, linear-gradient(#dcdcdc, #dcdcdc) 1163px 0 / 1px 100% no-repeat, linear-gradient(#dcdcdc, #dcdcdc) 1275px 0 / 1px 100% no-repeat, linear-gradient(#dcdcdc, #dcdcdc) 1373px 0 / 1px 100% no-repeat, linear-gradient(#dcdcdc, #dcdcdc) 1508px 0 / 1px 100% no-repeat, linear-gradient(#dcdcdc, #dcdcdc) 1652px 0 / 1px 100% no-repeat, linear-gradient(#dcdcdc, #dcdcdc) 1695px 0 / 1px 100% no-repeat, linear-gradient(#dcdcdc, #dcdcdc) 1796px 0 / 1px 100% no-repeat, linear-gradient(#dcdcdc, #dcdcdc) 1912px 0 / 1px 100% no-repeat, linear-gradient(#dcdcdc, #dcdcdc) 2072px 0 / 1px 100% no-repeat; }
.fb { position: absolute; right: 1px; top: 1px; width: 15px; height: 16px; background: #f3f3f3; border: 1px solid #a8b2bc; display: block; }
.fb svg { width: 13px; height: 14px; display: block; }
.ft { fill: #6a6a6a; }
.fs { stroke: #555; fill: none; }

/* inserted blank chart */
.shape { position: absolute; left: 1028px; top: 604px; width: 481px; height: 288px; border: 1px solid #5a5a5a; background: #fff; }
.h { position: absolute; width: 11px; height: 11px; border-radius: 50%; background: #fff; border: 1.5px solid #666; }
.tl { left: -6px; top: -6px; } .tm { left: 50%; top: -6px; margin-left: -6px; } .tr { right: -6px; top: -6px; }
.ml { left: -6px; top: 50%; margin-top: -6px; } .mr { right: -6px; top: 50%; margin-top: -6px; }
.bl { left: -6px; bottom: -6px; } .bm { left: 50%; bottom: -6px; margin-left: -6px; } .br { right: -6px; bottom: -6px; }

/* scatter menu */
.menu { position: absolute; left: 948px; top: 116px; width: 176px; height: 277px; background: #323130; border: 1px solid #444; border-radius: 6px; box-shadow: 0 4px 12px rgba(0,0,0,.3); padding: 1px; }
.mhead { font-weight: 700; font-size: 12px; line-height: 16px; padding: 6px 0 6px 15px; color: #f2f2f2; letter-spacing: 0; }
.mgrid { display: grid; grid-template-columns: repeat(3, 56px); grid-auto-rows: 56px; margin-left: 0; }
.mcell { height: 56px; }
.mcell.sel { background: #646464; }
.sc { width: 56px; height: 56px; display: block; }
.mdiv { height: 1px; background: #4a4a4a; margin: 8px 0 0; }
.mhead2 { padding: 8px 0 12px 15px; }
.mbub { grid-auto-rows: 44px; }
.bub { height: 44px; }
.bu { width: 56px; height: 44px; display: block; }
.mdiv2 { margin-top: 15px; }
.mfoot { display: flex; align-items: center; column-gap: 9px; padding: 7px 0 0 13px; line-height: 16px; color: #f0f0f0; }
.ax { stroke: #d8d8d8; fill: none; }
.op { stroke: #3a96dd; fill: none; stroke-width: 1; }
.fd { fill: #d8d8d8; }
.ln { stroke: #c8c8c8; fill: none; stroke-width: 1.2; }
.lb2 { stroke: #3a96dd; fill: none; stroke-width: 1.2; }
.bb { fill: #0a66b8; stroke: #e8e8e8; }
.o1 { fill: #e0e0e0; } .o2 { fill: #a8a8a8; } .o3 { fill: #5a5a5a; } .o4 { fill: #a0a0a0; } .o5 { fill: #5c5c5c; }

.redmark { position: absolute; left: 906px; top: 128px; width: 140px; height: 100px; }
.redmark path { stroke: #d81c1c; stroke-width: 1.5; fill: none; }
```
